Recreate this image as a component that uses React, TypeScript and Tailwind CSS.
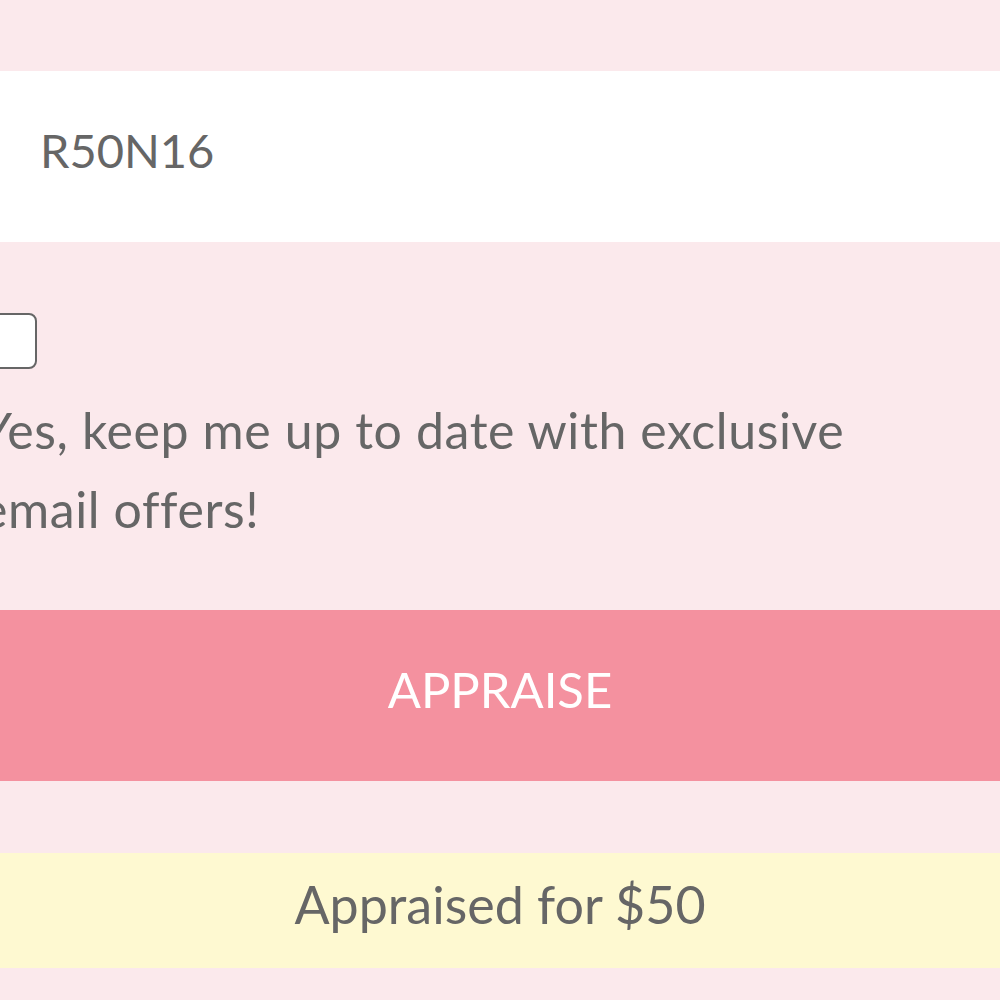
export default function App() {
  return (
    <div className="h-[1000px] w-[1000px] overflow-hidden bg-[#fbe9ec] font-['Lato',sans-serif] text-[#666666]">
      <div className="pt-[71px]">
        {/* Code input */}
        <div className="flex h-[171px] items-center bg-white pb-[12px] pl-[40px] text-[47px]">
          <span>R50N16</span>
        </div>

        {/* Opt-in */}
        <div className="-ml-[19px] mt-[71px]">
          <div className="h-[56px] w-[56px] rounded-[8px] border-2 border-[#666666] bg-white" />
          <p className="mt-[22px] text-[50px] leading-[79px] tracking-[0.6px]">
            Yes, keep me up to date with exclusive
            <br />
            email offers!
          </p>
        </div>

        {/* Submit */}
        <button className="mt-[61px] flex h-[171px] w-full items-center justify-center bg-[#f4919f] pb-[12px] text-[49px] text-white">
          APPRAISE
        </button>

        {/* Result */}
        <div className="mt-[72px] flex h-[115px] items-center justify-center bg-[#fef9d1] pb-[14px] text-[52px]">
          Appraised for $50
        </div>
      </div>
    </div>
  );
}
